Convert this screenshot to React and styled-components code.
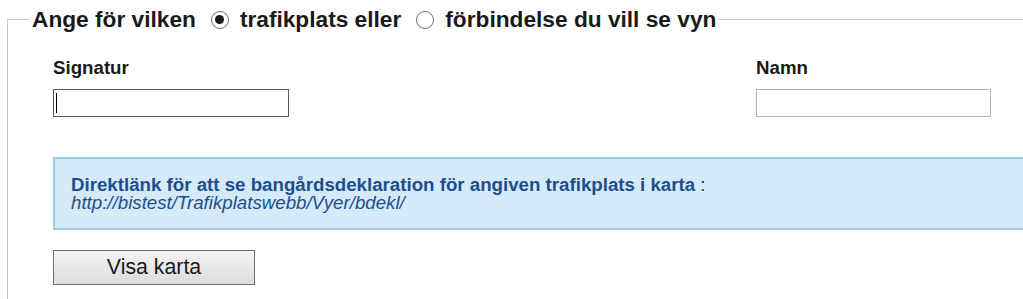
import React from 'react'
import styled, { createGlobalStyle } from 'styled-components'

const GlobalStyle = createGlobalStyle`
    html, body {
        margin: 0;
        padding: 0;
        background: #fff;
        overflow: hidden;
        font-family: "Liberation Sans", Arial, sans-serif;
    }
`

const Page = styled.div`
    width: 1023px;
    height: 299px;
    overflow: hidden;
    padding-top: 6px;
    box-sizing: border-box;
`

const Fieldset = styled.fieldset`
    margin: 0 0 0 7px;
    width: 1100px;
    border: 1px solid #c8c8c8;
    padding: 24px 0 30px 45px;
    box-sizing: border-box;
`

const Legend = styled.legend`
    display: flex;
    align-items: center;
    margin-left: -24px;
    padding: 0 2px 0 3px;
    font-size: 22.7px;
    font-weight: bold;
    color: #1a1a1a;
    white-space: nowrap;
`

const Radio = styled.span`
    width: 18px;
    height: 18px;
    border-radius: 50%;
    border: 1px solid #6b6b6b;
    box-sizing: border-box;
    display: inline-flex;
    align-items: center;
    justify-content: center;
    margin: 0 11px 0 15px;
    background: #fff;
    &::after {
        content: '';
        width: 9px;
        height: 9px;
        border-radius: 50%;
        background: ${props => props.checked ? '#1a1a1a' : 'transparent'};
    }
`

const FieldRow = styled.div`
    display: flex;
    flex-direction: row;
`

const Field = styled.div`
    width: ${props => props.width};
    display: flex;
    flex-direction: column;
`

const Label = styled.label`
    font-size: 18.7px;
    font-weight: bold;
    color: #1a1a1a;
    margin-bottom: 10px;
`

const TextInput = styled.input`
    width: ${props => props.focused ? '236px' : '235px'};
    height: 28px;
    box-sizing: border-box;
    border: 1px solid ${props => props.focused ? '#5a5a5a' : '#b4b4b4'};
    padding: 2px 4px;
    font-family: "Liberation Sans", Arial, sans-serif;
    font-size: 18px;
    outline: none;
`

const Caret = styled.span`
    position: absolute;
    left: 3px;
    top: 4px;
    width: 1px;
    height: 20px;
    background: #000;
`

const InputWrap = styled.div`
    position: relative;
    width: 236px;
`

const InfoBox = styled.div`
    margin-top: 40px;
    height: 73px;
    box-sizing: border-box;
    background: #d5eaf8;
    border: 2px solid #9dcbe4;
    border-right: none;
    padding: 16.5px 16px 0 16px;
    font-size: 18.7px;
    line-height: 18px;
    color: #1d4f8c;
`

const InfoTitle = styled.span`
    font-weight: bold;
`

const InfoColon = styled.span`
    color: #2a2a2a;
`

const InfoLink = styled.div`
    font-style: italic;
    color: #1d4f8c;
`

const PrimaryButton = styled.button`
    margin-top: 20px;
    width: 202px;
    height: 35px;
    border: 1px solid #707070;
    background: linear-gradient(#f4f4f4, #dcdcdc);
    font-family: "Liberation Sans", Arial, sans-serif;
    font-size: 21.3px;
    color: #1a1a1a;
    padding: 0;
`

const App = () => {
    return (
        <Page>
            <GlobalStyle />
            <Fieldset>
                <Legend>
                    Ange för vilken
                    <Radio checked />
                    trafikplats eller
                    <Radio />
                    förbindelse du vill se vyn
                </Legend>
                <FieldRow>
                    <Field width="703px">
                        <Label>Signatur</Label>
                        <InputWrap>
                            <TextInput focused />
                            <Caret />
                        </InputWrap>
                    </Field>
                    <Field width="235px">
                        <Label>Namn</Label>
                        <TextInput />
                    </Field>
                </FieldRow>
                <InfoBox>
                    <InfoTitle>Direktlänk för att se bangårdsdeklaration för angiven trafikplats i karta</InfoTitle>
                    <InfoColon> :</InfoColon>
                    <InfoLink>http://bistest/Trafikplatswebb/Vyer/bdekl/</InfoLink>
                </InfoBox>
                <PrimaryButton>Visa karta</PrimaryButton>
            </Fieldset>
        </Page>
    )
}

export default App
